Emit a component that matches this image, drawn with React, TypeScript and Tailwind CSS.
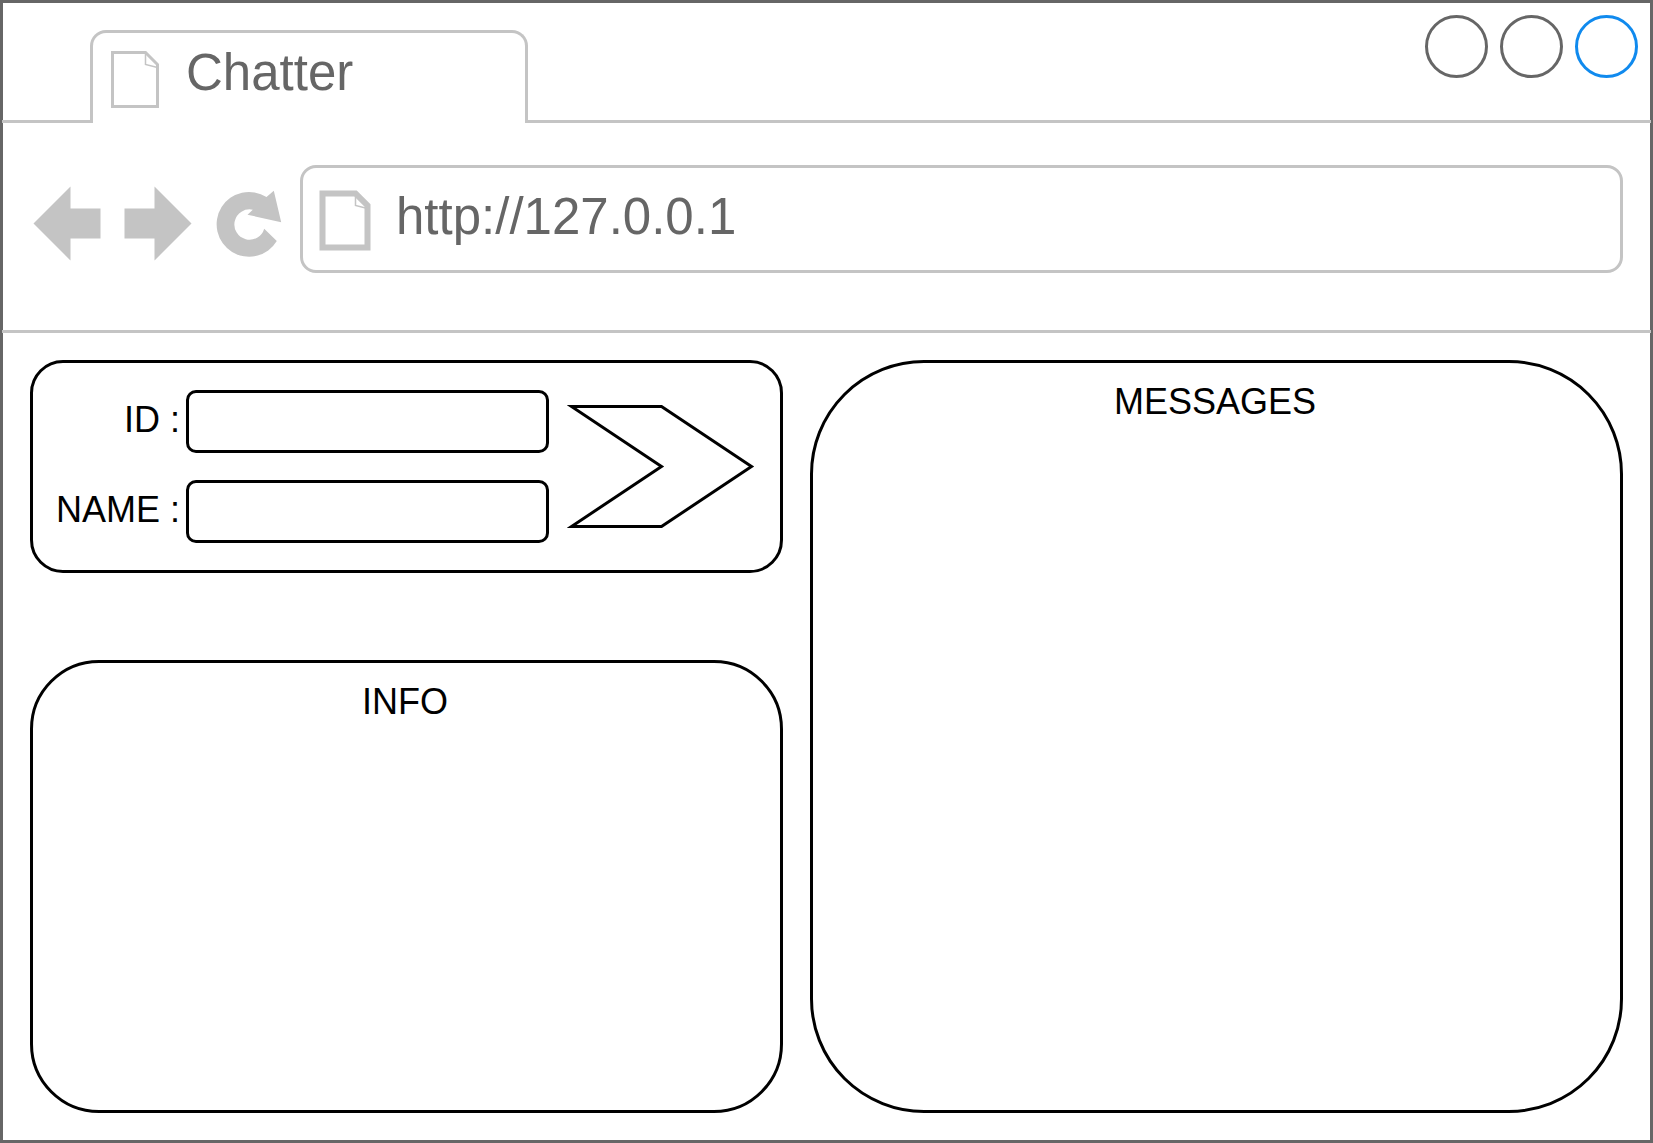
import { useState } from "react";
import type { ReactNode } from "react";

function TabPageIcon() {
  return (
    <svg viewBox="0 0 50 60" className="h-[60px] w-[50px] shrink-0" fill="none" stroke="#c4c4c4" aria-hidden="true">
      <path d="M2.5 2.5H35.5L47.5 14.5V56.5H2.5Z" strokeWidth="3" />
      <path d="M35.5 3V14.5L47.5 17.5" strokeWidth="1.5" />
    </svg>
  );
}

function AddressPageIcon() {
  return (
    <svg viewBox="0 0 54 64" className="h-[64px] w-[54px] shrink-0" fill="none" stroke="#c4c4c4" aria-hidden="true">
      <path d="M4.5 6.5H37.5L49.5 18.5V60.5H4.5Z" strokeWidth="6" />
      <path d="M37.5 7V18.5L49.5 21.5" strokeWidth="1.5" />
    </svg>
  );
}

function NavButton({ label, children }: { label: string; children: ReactNode }) {
  return (
    <button type="button" aria-label={label} className="shrink-0">
      <svg viewBox="0 0 70 76" className="block h-[76px] w-[70px]" fill="#c4c4c4">
        {children}
      </svg>
    </button>
  );
}

function Field({ id, label }: { id: string; label: string }) {
  const [value, setValue] = useState("");
  return (
    <div className="flex items-center gap-1.5">
      <label htmlFor={id} className="w-[132px] pb-1 text-right text-[36px] leading-[42px] whitespace-nowrap">
        {label}
      </label>
      <input
        id={id}
        value={value}
        onChange={(e) => setValue(e.target.value)}
        className="h-[63px] min-w-0 flex-1 rounded-[10px] border-3 border-black px-3 text-[36px]"
      />
    </div>
  );
}

export default function App() {
  const [url, setUrl] = useState("http://127.0.0.1");
  return (
    <div className="flex min-h-screen flex-col border-3 border-[#666666] bg-white font-['Liberation_Sans',Arial,sans-serif] text-black">
      <header className="-mx-px text-[#666666]">
        <div className="flex h-[120px] items-end">
          <div className="w-[88px] shrink-0 border-b-3 border-[#c4c4c4]" />
          <button
            type="button"
            className="flex h-[93px] w-[438px] items-start gap-[26px] rounded-t-2xl border-3 border-b-0 border-[#c4c4c4] pt-[17px] pl-[17px] text-[51px] leading-[46px]"
          >
            <TabPageIcon />
            <span>Chatter</span>
          </button>
          <div className="flex flex-1 items-start justify-end gap-3 self-stretch border-b-3 border-[#c4c4c4] pt-3 pr-[13px]">
            <button type="button" aria-label="Minimize" className="size-[63px] rounded-full border-3 border-[#666666]" />
            <button type="button" aria-label="Maximize" className="size-[63px] rounded-full border-3 border-[#666666]" />
            <button type="button" aria-label="Close" className="size-[63px] rounded-full border-3 border-[#108aee]" />
          </div>
        </div>
        <div className="flex items-start gap-[14px] border-b-3 border-[#c4c4c4] pt-[42px] pr-7 pb-[57px] pl-[30px]">
          <nav className="flex gap-[22px] pt-[21px]">
            <NavButton label="Back">
              <path d="M1.5 37.5L38.5 0.5V22.5H68.5V52.5H38.5V74.5Z" />
            </NavButton>
            <NavButton label="Forward">
              <path d="M67.5 37.5L30.5 0.5V22.5H0.5V52.5H30.5V74.5Z" />
            </NavButton>
            <NavButton label="Reload">
              <path d="M50.5 11L57.8 4.7L65.2 36.2L31.5 28.7L36.8 23.7A15.2 15.2 0 1 0 48.2 42.7L60.8 55A32.4 32.4 0 1 1 50.5 11Z" />
            </NavButton>
          </nav>
          <div className="flex h-[108px] min-w-0 flex-1 items-center gap-6 rounded-2xl border-3 border-[#c4c4c4] pl-[15px]">
            <AddressPageIcon />
            <input
              aria-label="Address"
              value={url}
              onChange={(e) => setUrl(e.target.value)}
              className="h-16 min-w-0 flex-1 pb-1 text-[51px]"
            />
          </div>
        </div>
      </header>
      <main className="grid flex-1 grid-cols-[minmax(0,753fr)_minmax(0,813fr)] gap-[27px] p-[27px]">
        <div className="flex flex-col gap-[87px]">
          <form
            onSubmit={(e) => e.preventDefault()}
            className="flex items-center gap-[18px] rounded-[33px] border-3 border-black py-[27px] pr-[25px] pl-[15px]"
          >
            <div className="flex min-w-0 flex-1 flex-col gap-[27px]">
              <Field id="user-id" label="ID :" />
              <Field id="user-name" label="NAME :" />
            </div>
            <button type="submit" aria-label="Submit" className="shrink-0">
              <svg viewBox="0 0 188 124" className="block h-[124px] w-[188px]" fill="none" stroke="#000" strokeWidth="3" strokeMiterlimit="10">
                <path d="M4.5 1.5H94.5L184.5 61.5L94.5 121.5H4.5L94.5 61.5Z" />
              </svg>
            </button>
          </form>
          <section className="flex-1 rounded-[69px] border-3 border-black pt-[18px] pr-[3px]">
            <h2 className="text-center text-[36px] leading-[42px]">INFO</h2>
          </section>
        </div>
        <section className="rounded-[114px] border-3 border-black pt-[18px] pr-[3px]">
          <h2 className="text-center text-[36px] leading-[42px]">MESSAGES</h2>
        </section>
      </main>
    </div>
  );
}
